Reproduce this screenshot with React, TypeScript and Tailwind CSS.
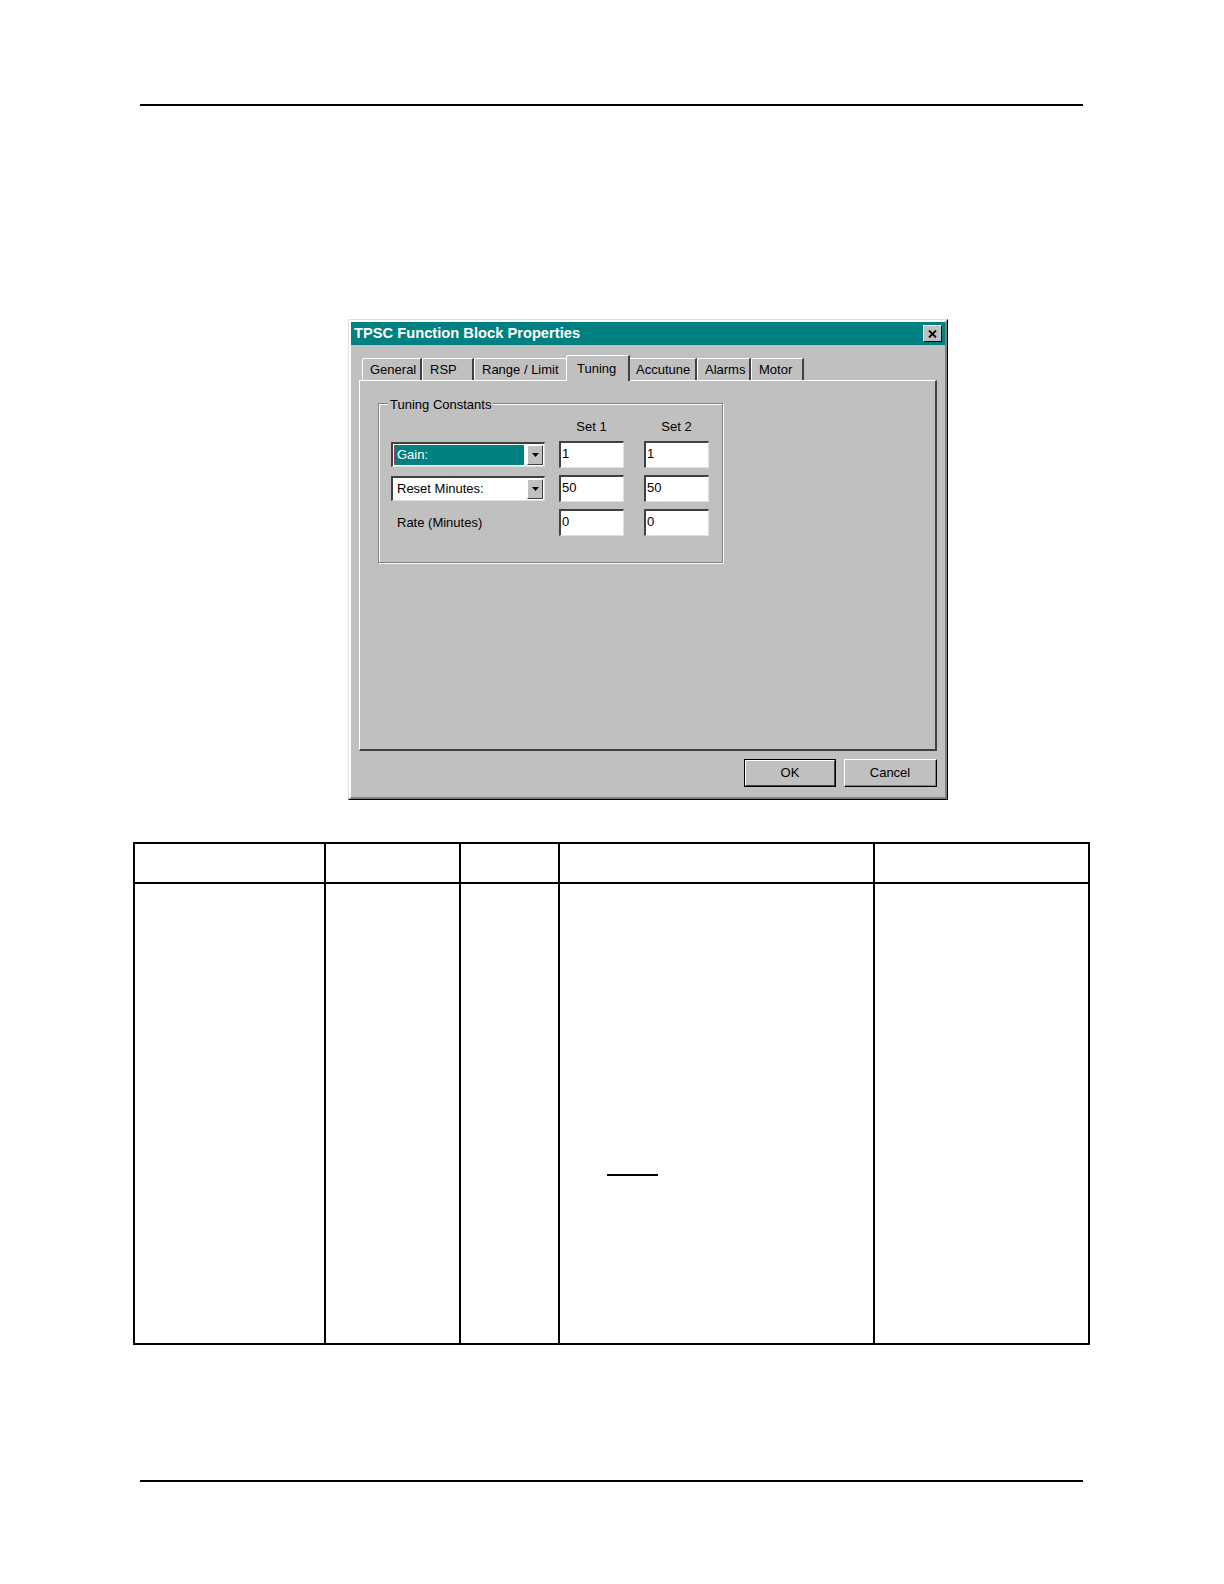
import React from "react";

const F = { fontFamily: '"Liberation Sans", Arial, sans-serif' };

function Tab({ label, w, selected }: { label: string; w: number; selected?: boolean }) {
  if (selected) {
    return (
      <div
        className="relative z-10 -mb-[1px] mx-[-2px] flex h-[26px] items-start rounded-tl-[2px] border-l border-t border-white border-r-2 border-r-[#404040] bg-[#c0c0c0] pl-[10px] pt-[3px] text-[13px] text-black"
        style={{ width: w + 4 }}
      >
        {label}
      </div>
    );
  }
  return (
    <div
      className="flex h-[22px] items-center rounded-tl-[2px] border-l border-t border-white border-r-2 border-r-[#404040] bg-[#c0c0c0] pl-[7px] text-[13px] text-black"
      style={{ width: w }}
    >
      {label}
    </div>
  );
}

function TextBox({ value }: { value: string }) {
  return (
    <div className="flex h-[27px] w-[65px] items-center border-l-2 border-t-2 border-l-[#404040] border-t-[#404040] border-r border-b border-r-[#dfdfdf] border-b-[#dfdfdf] bg-white pb-[2px] pl-[1px] text-[13px] text-black">
      {value}
    </div>
  );
}

function Combo({ label, highlighted }: { label: string; highlighted?: boolean }) {
  return (
    <div className="mt-[1px] flex h-[25px] w-[154px] items-stretch border-l-2 border-t-2 border-l-[#404040] border-t-[#404040] border-r border-b border-r-[#dfdfdf] border-b-[#dfdfdf] bg-white p-[1px]">
      <div className="mr-[3px] flex flex-1 items-center">
        <div
          className={
            highlighted
              ? "flex h-full w-full items-center border border-dotted border-[#a04060] bg-[#008080] pl-[2px] text-[13px] text-white"
              : "flex h-full w-full items-center pl-[3px] text-[13px] text-black"
          }
        >
          {label}
        </div>
      </div>
      <div className="flex w-[16px] items-center justify-center border-l border-t border-white border-r border-b border-r-[#404040] border-b-[#404040] bg-[#c0c0c0]">
        <svg width="7" height="4" viewBox="0 0 7 4">
          <path d="M0 0h7L3.5 4z" fill="#000" />
        </svg>
      </div>
    </div>
  );
}

export default function App() {
  return (
    <div className="relative flex h-[1584px] w-[1224px] flex-col bg-white" style={F}>
      <div className="ml-[140px] mt-[104px] h-[2px] w-[943px] bg-black" />

      {/* Dialog */}
      <div className="ml-[348px] mt-[213px] flex h-[481px] w-[600px] flex-col border border-t-[#dfdfdf] border-l-[#dfdfdf] border-r-black border-b-black bg-[#c0c0c0]">
        <div className="flex flex-1 flex-col border-2 border-t-white border-l-white border-r-[#808080] border-b-[#808080]">
          {/* Title bar */}
          <div className="flex h-[23px] items-center justify-between bg-[#008080] pl-[3px] pr-[3px]">
            <span className="text-[14.7px] font-bold text-white">TPSC Function Block Properties</span>
            <div className="flex h-[17px] w-[19px] items-center justify-center border border-t-white border-l-white border-r-black border-b-black bg-[#c0c0c0]">
              <svg width="9" height="8" viewBox="0 0 9 8">
                <path d="M1 0.5L8 7.5M8 0.5L1 7.5" stroke="#000" strokeWidth="1.8" />
              </svg>
            </div>
          </div>

          {/* Tabs */}
          <div className="ml-[11px] mt-[10px] flex h-[25px] items-end">
            <Tab label="General" w={60} />
            <Tab label="RSP" w={52} />
            <Tab label="Range / Limit" w={94} />
            <Tab label="Tuning" w={60} selected />
            <Tab label="Accutune" w={69} />
            <Tab label="Alarms" w={54} />
            <Tab label="Motor" w={53} />
          </div>

          {/* Panel */}
          <div className="ml-[8px] h-[371px] w-[578px] border-l border-t border-white border-r-2 border-b-2 border-r-[#404040] border-b-[#404040] pl-[18px] pt-[22px]">
            <div className="relative h-[160px] w-[345px] border border-[#808080] shadow-[inset_1px_1px_0_#ffffff,1px_1px_0_#ffffff]">
              <div className="absolute left-[9px] top-[-9px] bg-[#c0c0c0] px-[2px] text-[13px] text-black">
                Tuning Constants
              </div>
              <div className="flex flex-col pl-[12px] pt-[13px]">
                <div className="flex h-[17px] text-[13px] text-black">
                  <div className="w-[168px]" />
                  <div className="w-[65px] text-center">Set 1</div>
                  <div className="w-[20px]" />
                  <div className="w-[65px] text-center">Set 2</div>
                </div>
                <div className="mt-[7px] flex items-start gap-[14px]">
                  <Combo label="Gain:" highlighted />
                  <div className="flex gap-[20px]">
                    <TextBox value="1" />
                    <TextBox value="1" />
                  </div>
                </div>
                <div className="mt-[7px] flex items-start gap-[14px]">
                  <Combo label="Reset Minutes:" />
                  <div className="flex gap-[20px]">
                    <TextBox value="50" />
                    <TextBox value="50" />
                  </div>
                </div>
                <div className="mt-[7px] flex items-center gap-[14px]">
                  <div className="w-[154px] pl-[6px] text-[13px] text-black">Rate (Minutes)</div>
                  <div className="flex gap-[20px]">
                    <TextBox value="0" />
                    <TextBox value="0" />
                  </div>
                </div>
              </div>
            </div>
          </div>

          {/* Buttons */}
          <div className="mr-[8px] mt-[8px] flex justify-end gap-[8px]">
            <div className="flex h-[28px] w-[92px] items-center justify-center border border-black">
              <div className="flex h-full w-full items-center justify-center border border-t-white border-l-white border-r-[#404040] border-b-[#404040] text-[13px] text-black">
                OK
              </div>
            </div>
            <div className="flex h-[28px] w-[93px] items-center justify-center border border-t-white border-l-white border-r-black border-b-black">
              <div className="flex h-full w-full items-center justify-center border-r border-b border-r-[#808080] border-b-[#808080] text-[13px] text-black">
                Cancel
              </div>
            </div>
          </div>
        </div>
      </div>

      {/* Table */}
      <div className="ml-[133px] mt-[42px] flex h-[503px] w-[957px] flex-col border-2 border-black">
        <div className="flex h-[40px] border-b-2 border-black">
          <div className="w-[191px] border-r-2 border-black" />
          <div className="w-[135px] border-r-2 border-black" />
          <div className="w-[99px] border-r-2 border-black" />
          <div className="w-[315px] border-r-2 border-black" />
          <div className="flex-1" />
        </div>
        <div className="flex flex-1">
          <div className="w-[191px] border-r-2 border-black" />
          <div className="w-[135px] border-r-2 border-black" />
          <div className="w-[99px] border-r-2 border-black" />
          <div className="flex w-[315px] flex-col border-r-2 border-black">
            <div className="ml-[47px] mt-[290px] h-[2px] w-[51px] bg-black" />
          </div>
          <div className="flex-1" />
        </div>
      </div>

      <div className="ml-[140px] mt-[135px] h-[2px] w-[943px] bg-black" />
    </div>
  );
}
